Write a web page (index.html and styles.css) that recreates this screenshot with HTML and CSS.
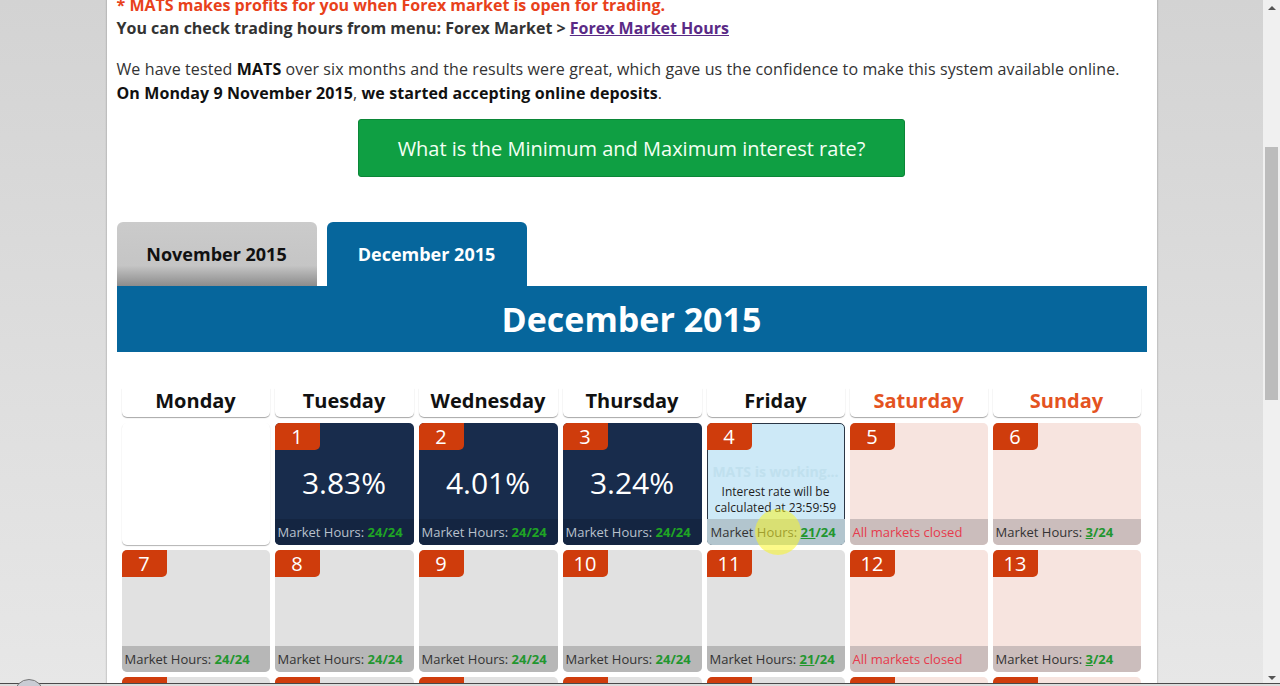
FILE: index.html
```html
<!DOCTYPE html>
<html lang="en">
<head>
    <meta charset="UTF-8">
    <title>MATS - Interest Calendar</title>
    <link rel="stylesheet" href="styles.css">
</head>
<body>
    <div class="screen">
        <div class="viewport">
            <div class="page">
                <p class="notice">
                    <span class="alert">* MATS makes profits for you when Forex market is open for trading.</span><br>
                    You can check trading hours from menu: Forex Market &gt; <a href="#">Forex Market Hours</a>
                </p>

                <p class="intro">
                    We have tested <b>MATS</b> over six months and the results were great, which gave us the confidence to make this system available online.<br>
                    <b>On Monday 9 November 2015</b>, <b>we started accepting online deposits</b>.
                </p>

                <div class="cta-wrap">
                    <a href="#" class="cta">What is the Minimum and Maximum interest rate?</a>
                </div>

                <div class="tabs">
                    <div class="tab">November 2015</div>
                    <div class="tab active">December 2015</div>
                </div>
                <div class="month-bar">December 2015</div>

                <div class="calendar">
                    <div class="weekdays">
                        <div class="weekday">Monday</div>
                        <div class="weekday">Tuesday</div>
                        <div class="weekday">Wednesday</div>
                        <div class="weekday">Thursday</div>
                        <div class="weekday">Friday</div>
                        <div class="weekday weekend">Saturday</div>
                        <div class="weekday weekend">Sunday</div>
                    </div>

                    <div class="days">
                        <div class="day empty"></div>

                        <div class="day past">
                            <div class="num">1</div>
                            <div class="body"><span class="rate">3.83%</span></div>
                            <div class="foot">Market Hours: <b class="hrs">24/24</b></div>
                        </div>
                        <div class="day past">
                            <div class="num">2</div>
                            <div class="body"><span class="rate">4.01%</span></div>
                            <div class="foot">Market Hours: <b class="hrs">24/24</b></div>
                        </div>
                        <div class="day past">
                            <div class="num">3</div>
                            <div class="body"><span class="rate">3.24%</span></div>
                            <div class="foot">Market Hours: <b class="hrs">24/24</b></div>
                        </div>
                        <div class="day today">
                            <div class="num">4</div>
                            <div class="body">
                                <div class="working">MATS is working...</div>
                                <div class="pending">Interest rate will be<br>calculated at 23:59:59</div>
                            </div>
                            <div class="foot">Market Hours: <b class="hrs"><u>21</u>/24</b></div>
                            <div class="cursor-glow"></div>
                        </div>
                        <div class="day closed">
                            <div class="num">5</div>
                            <div class="body"></div>
                            <div class="foot"><span class="shut">All markets closed</span></div>
                        </div>
                        <div class="day closed">
                            <div class="num">6</div>
                            <div class="body"></div>
                            <div class="foot">Market Hours: <b class="hrs"><u>3</u>/24</b></div>
                        </div>

                        <div class="day">
                            <div class="num">7</div>
                            <div class="body"></div>
                            <div class="foot">Market Hours: <b class="hrs">24/24</b></div>
                        </div>
                        <div class="day">
                            <div class="num">8</div>
                            <div class="body"></div>
                            <div class="foot">Market Hours: <b class="hrs">24/24</b></div>
                        </div>
                        <div class="day">
                            <div class="num">9</div>
                            <div class="body"></div>
                            <div class="foot">Market Hours: <b class="hrs">24/24</b></div>
                        </div>
                        <div class="day">
                            <div class="num">10</div>
                            <div class="body"></div>
                            <div class="foot">Market Hours: <b class="hrs">24/24</b></div>
                        </div>
                        <div class="day">
                            <div class="num">11</div>
                            <div class="body"></div>
                            <div class="foot">Market Hours: <b class="hrs"><u>21</u>/24</b></div>
                        </div>
                        <div class="day closed">
                            <div class="num">12</div>
                            <div class="body"></div>
                            <div class="foot"><span class="shut">All markets closed</span></div>
                        </div>
                        <div class="day closed">
                            <div class="num">13</div>
                            <div class="body"></div>
                            <div class="foot">Market Hours: <b class="hrs"><u>3</u>/24</b></div>
                        </div>

                        <div class="day"><div class="num">14</div></div>
                        <div class="day"><div class="num">15</div></div>
                        <div class="day"><div class="num">16</div></div>
                        <div class="day"><div class="num">17</div></div>
                        <div class="day"><div class="num">18</div></div>
                        <div class="day closed"><div class="num">19</div></div>
                        <div class="day closed"><div class="num">20</div></div>
                    </div>
                </div>
            </div>
        </div>

        <div class="scrollbar">
            <div class="arrow up"></div>
            <div class="thumb"></div>
            <div class="arrow down"></div>
        </div>
    </div>

    <div class="taskbar-edge"><div class="orb"></div></div>
</body>
</html>
```

FILE: styles.css
```css
* {
    box-sizing: border-box;
}

body {
    margin: 0;
    font-family: 'Open Sans', 'Liberation Sans', sans-serif;
    font-size: 16px;
    color: #333;
    overflow: hidden;
}

.screen {
    display: flex;
    height: 686px;
}

/* page area */

.viewport {
    flex: 1;
    overflow: hidden;
    background: linear-gradient(to bottom, #d3d3d3 0%, #e7e7e7 100%);
}

.page {
    width: 1050px;
    margin: 0 auto;
    padding: 0 10px 40px;
    background: #fff;
    box-shadow: 0 0 2px rgba(0, 0, 0, 0.35);
}

.notice {
    margin: -6px 0 0;
    line-height: 23px;
    font-weight: 700;
    color: #333;
}

.notice .alert {
    color: #e8411b;
}

.notice a {
    color: #5a2a86;
    text-decoration: underline;
}

.intro {
    margin: 17px 0 0;
    line-height: 24px;
    color: #333;
    letter-spacing: 0.1px;
}

.intro b {
    font-weight: 700;
    color: #111;
}

.cta-wrap {
    margin-top: 14px;
    text-align: center;
}

.cta {
    display: inline-block;
    width: 547px;
    height: 58px;
    line-height: 58px;
    background: #0f9f43;
    border: 1px solid #0b8637;
    border-radius: 3px;
    color: #f4fff4;
    font-size: 20px;
    text-decoration: none;
}

/* tabs */

.tabs {
    display: flex;
    gap: 10px;
    margin-top: 45px;
}

.tab {
    width: 200px;
    height: 64px;
    line-height: 64px;
    text-align: center;
    border-radius: 6px 6px 0 0;
    font-size: 18px;
    font-weight: 700;
    color: #111;
    background: linear-gradient(to bottom, #cbcbcb 0%, #c5c5c5 68%, #8c8c8c 100%);
}

.tab.active {
    background: #06669c;
    color: #fff;
}

.month-bar {
    height: 66px;
    line-height: 66px;
    background: #06669c;
    color: #fff;
    text-align: center;
    font-size: 34px;
    font-weight: 700;
}

/* calendar */

.calendar {
    margin-top: 36px;
    padding: 0 5px;
}

.weekdays,
.days {
    display: grid;
    grid-template-columns: 148px 139px 139px 139px 138px 138px 148px;
    column-gap: 5px;
}

.weekdays {
    margin-bottom: 6px;
}

.weekday {
    height: 29px;
    line-height: 25px;
    text-align: center;
    font-size: 20px;
    font-weight: 700;
    color: #111;
    background: #fff;
    border-radius: 0 0 5px 5px;
    box-shadow: 0 1px 1px rgba(0, 0, 0, 0.35);
}

.weekday.weekend {
    color: #e4531f;
}

.days {
    grid-auto-rows: 122px;
    row-gap: 5px;
}

.day {
    position: relative;
    display: flex;
    flex-direction: column;
    border-radius: 5px;
    background: #e1e1e1;
}

.day.empty {
    background: #fff;
    box-shadow: 0 1px 1px rgba(0, 0, 0, 0.3);
}

.num {
    width: 45px;
    height: 27px;
    line-height: 28px;
    text-align: center;
    background: #cf3c0c;
    color: #fff;
    font-size: 20px;
    border-radius: 5px 0 5px 0;
}

.body {
    flex: 1;
    display: flex;
    flex-direction: column;
    align-items: center;
    justify-content: center;
}

.foot {
    height: 26px;
    line-height: 26px;
    padding-left: 3px;
    font-size: 13px;
    color: #333;
    background: #b7b7b7;
    border-radius: 0 0 5px 5px;
    white-space: nowrap;
}

.hrs {
    color: #22962f;
    font-weight: 700;
}

.hrs u {
    text-decoration-thickness: 1px;
}

.shut {
    color: #e63a4c;
}

/* past days */

.day.past {
    background: #182c4c;
}

.day.past .foot {
    background: #142541;
    color: #b9c1cd;
}

.day.past .hrs {
    color: #1fa524;
}

.rate {
    font-size: 30px;
    color: #fff;
    margin-bottom: 5px;
}

/* today */

.day.today {
    background: #cde9f7;
    border: 1px solid #2a3645;
}

.day.today .num {
    margin: -1px 0 0 -1px;
}

.day.today .body {
    padding-top: 10px;
}

.day.today .foot {
    background: #b2c5ce;
    margin: 0 -1px -1px;
    padding-left: 4px;
}

.working {
    font-size: 14px;
    font-weight: 700;
    color: #c0e0ee;
    line-height: 18px;
}

.pending {
    margin-top: 3px;
    font-size: 12px;
    line-height: 16px;
    text-align: center;
    color: #1e1e1e;
}

.cursor-glow {
    position: absolute;
    left: 47px;
    top: 85px;
    width: 46px;
    height: 46px;
    border-radius: 50%;
    background: rgba(250, 245, 40, 0.55);
    z-index: 2;
}

/* weekend */

.day.closed {
    background: #f7e4df;
}

.day.closed .foot {
    background: #cbbdbc;
}

/* fake browser scrollbar */

.scrollbar {
    width: 17px;
    display: flex;
    flex-direction: column;
    background: #f0f0f0;
}

.arrow {
    height: 17px;
    position: relative;
}

.arrow::after {
    content: "";
    position: absolute;
    left: 5px;
    top: 6px;
    border-left: 4px solid transparent;
    border-right: 4px solid transparent;
}

.arrow.up::after {
    border-bottom: 4px solid #555;
}

.arrow.down {
    margin-top: auto;
}

.arrow.down::after {
    top: 7px;
    border-top: 4px solid #555;
}

.thumb {
    margin: 130px 2px 0;
    height: 253px;
    background: #bcbcbc;
}

.taskbar-edge {
    position: fixed;
    left: 0;
    right: 0;
    bottom: 0;
    height: 3px;
    border-top: 1px solid #4a4a4a;
    background: #dcdcdc;
}

.orb {
    position: absolute;
    left: 14px;
    top: -5px;
    width: 30px;
    height: 30px;
    border-radius: 50%;
    border: 1px solid #777;
    background: #c9ccd4;
}
```
